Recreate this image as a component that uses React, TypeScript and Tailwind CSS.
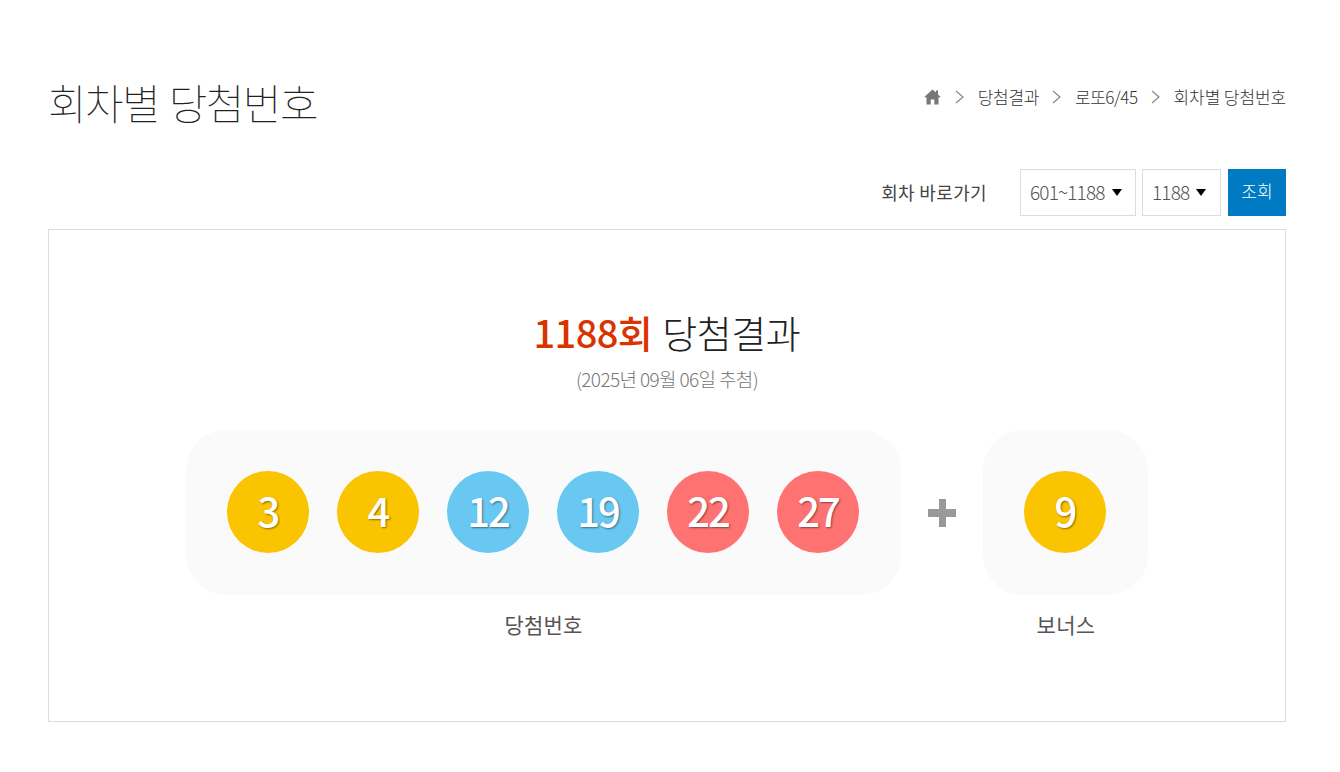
const font = { fontFamily: '"Noto Sans CJK KR", "Noto Sans", sans-serif' };

const crumbs = [
  { label: "당첨결과", tracking: "tracking-[-0.35px]" },
  { label: "로또6/45", tracking: "tracking-[-0.45px]" },
  { label: "회차별 당첨번호", tracking: "tracking-[-0.1px]" },
];

const balls = [
  { n: 3, color: "bg-[#fbc400]" },
  { n: 4, color: "bg-[#fbc400]" },
  { n: 12, color: "bg-[#69c8f2]" },
  { n: 19, color: "bg-[#69c8f2]" },
  { n: 22, color: "bg-[#ff7272]" },
  { n: 27, color: "bg-[#ff7272]" },
];

function Ball({ n, color }: { n: number; color: string }) {
  return (
    <div
      className={`${color} w-[82px] h-[82px] rounded-full flex items-center justify-center pb-[4px] text-white text-[40px] font-medium tracking-[-2px] [text-shadow:1px_1px_2px_rgba(0,0,0,0.45)]`}
    >
      {n}
    </div>
  );
}

function Select({ label, width }: { label: string; width: string }) {
  return (
    <div
      className={`${width} h-[47px] border border-[#dcdcdc] flex items-center pl-[9px] gap-[7px] text-[19px] font-light tracking-[-0.85px] text-[#555]`}
    >
      <span>{label}</span>
      <span className="w-0 h-0 border-x-[5px] border-x-transparent border-t-[7px] border-t-black" />
    </div>
  );
}

function Chevron() {
  return (
    <svg width="10" height="14" viewBox="0 0 10 14" className="mx-[13px]">
      <path d="M1 1 L8 7 L1 13" fill="none" stroke="#888" strokeWidth="1.2" />
    </svg>
  );
}

function HomeIcon() {
  return (
    <svg width="17" height="16" viewBox="0 0 17 16" className="-translate-x-[1px]">
      <path d="M8.5 0.5 L12 3.6 V1.5 H14 V5.4 L17 8.2 H14.5 V15.5 H10.3 V10.5 H6.7 V15.5 H2.5 V8.2 H0 Z" fill="#777" />
    </svg>
  );
}

export default function App() {
  return (
    <div style={font} className="w-[1340px] h-[772px] bg-white pl-[48px] pr-[54px] overflow-hidden">
      <div className="flex justify-between items-start pt-[72px] h-[169px]">
        <h1 className="text-[42px] leading-[60px] font-thin tracking-[-1.6px] [word-spacing:2px] text-[#222]">회차별 당첨번호</h1>
        <div className="flex items-center h-[50px] text-[17px] font-light text-[#333]">
          <HomeIcon />
          <Chevron />
          {crumbs.map((c, i) => (
            <div key={c.label} className="flex items-center">
              <span className={c.tracking}>{c.label}</span>
              {i < crumbs.length - 1 && <Chevron />}
            </div>
          ))}
        </div>
      </div>

      <div className="flex justify-end items-center h-[47px]">
        <span className="text-[18px] font-normal tracking-[0.35px] text-[#444] mr-[33px] pb-[1px]">회차 바로가기</span>
        <Select label="601~1188" width="w-[116px]" />
        <div className="w-[6px]" />
        <Select label="1188" width="w-[79px]" />
        <button className="ml-[7px] w-[58px] h-[47px] pb-[4px] bg-[#007bc3] text-white text-[17px] font-light">조회</button>
      </div>

      <div className="mt-[13px] h-[493px] border border-[#dcdcdc] flex flex-col items-center">
        <h2 className="mt-[72px] text-[38px] leading-[60px] tracking-[-0.4px] font-light text-[#222]">
          <span className="font-medium text-[#d93300] tracking-[-0.6px]">1188회</span>{" "}
          <span className="ml-[2px]">당첨결과</span>
        </h2>
        <p className="mt-[2px] text-[19px] leading-[30px] font-light tracking-[-0.62px] text-[#777]">
          (2025년 09월 06일 추첨)
        </p>

        <div className="mt-[36px] flex items-start">
          <div className="flex flex-col items-center">
            <div className="w-[715px] h-[165px] pb-[1px] pr-[1px] rounded-[40px] bg-[#fafafa] flex items-center justify-center gap-[28px]">
              {balls.map((b) => (
                <Ball key={b.n} n={b.n} color={b.color} />
              ))}
            </div>
            <span className="mt-[13px] text-[21px] leading-[32px] tracking-[0.2px] text-[#555]">당첨번호</span>
          </div>

          <div className="w-[82px] h-[165px] flex items-center justify-center">
            <div className="relative w-[28px] h-[28px]">
              <div className="absolute left-0 top-[10px] w-[28px] h-[8px] bg-[#999]" />
              <div className="absolute left-[11px] top-0 w-[7px] h-[28px] bg-[#999]" />
            </div>
          </div>

          <div className="flex flex-col items-center">
            <div className="w-[165px] h-[165px] pb-[1px] pr-[1px] rounded-[40px] bg-[#fafafa] flex items-center justify-center">
              <Ball n={9} color="bg-[#fbc400]" />
            </div>
            <span className="mt-[13px] pl-[1px] text-[21px] leading-[32px] tracking-[0.3px] text-[#555]">보너스</span>
          </div>
        </div>
      </div>
    </div>
  );
}
